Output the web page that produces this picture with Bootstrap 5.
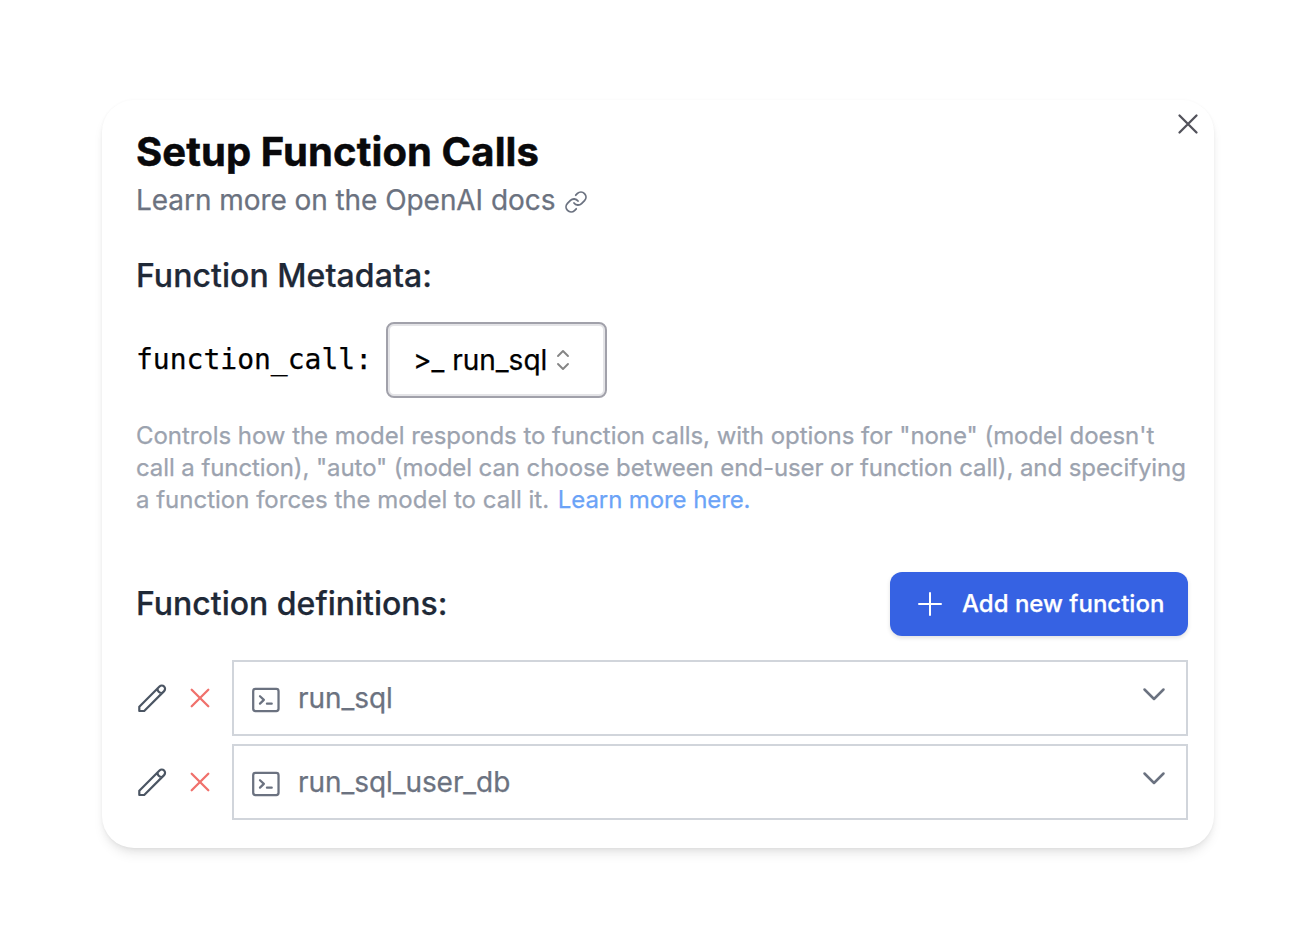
<!DOCTYPE html>
<html lang="en">
<head>
<meta charset="utf-8">
<title>Setup Function Calls</title>
<link href="https://cdn.jsdelivr.net/npm/bootstrap@5.3.0/dist/css/bootstrap.min.css" rel="stylesheet">
<style>
body{font-family:Inter,"Liberation Sans",sans-serif;background:#fff;color:#09090b;padding:100px 102px;-webkit-text-stroke:.25px}
svg{display:block;flex:none;fill:none;stroke:currentColor;stroke-linecap:round;stroke-linejoin:round}
.dialog-panel{height:748px;border-radius:32px;padding:24px 26px 28px 34px;background:#fff;box-shadow:0 8px 12px -2px rgba(0,0,0,.08),0 4px 8px -4px rgba(0,0,0,.1),0 0 3px rgba(0,0,0,.04)}
.close-x{top:12px;right:14px;color:#52525b;line-height:0}
h1{font-size:40px;line-height:56px;font-weight:700;letter-spacing:.1px;-webkit-text-stroke:.5px}
.docs-link{font-size:28px;line-height:40px;color:#6b7280;gap:9px;letter-spacing:-.06px}
.docs-link svg{margin-top:4px}
h2{font-size:32px;line-height:48px;font-weight:500;color:#1f2937}
.meta-title{margin-top:32px;letter-spacing:.06px}
.call-row{margin-top:22px;gap:14px}
.call-name{font-family:"DejaVu Sans Mono",monospace;font-size:28px;line-height:40px;color:#000}
.call-select{width:221px;height:76px;border:2px solid #a1a1aa;border-radius:8px;box-shadow:inset 0 0 0 2px #e4e4e7;padding:0 25px;font-size:28px;color:#000;background:#fff}
.call-select svg{color:#858585;margin-left:7px}
.help-text{font-size:24px;line-height:32px;color:#9ca3af;margin-top:22px;letter-spacing:-.045px;white-space:nowrap}
.help-mid{letter-spacing:-.09px}
.help-end{letter-spacing:0}
.help-text a{color:#6ba3f7;margin-left:2px;letter-spacing:-.1px}
.defs-head{margin-top:56px;height:64px}
.add-btn,.add-btn:hover{width:298px;height:64px;border-radius:12px;border:0;background:#3662e3;color:#fff;font-size:24px;font-weight:500;padding:0 24px;gap:16px;white-space:nowrap;box-shadow:0 2px 4px rgba(0,0,0,.12)}
.def-list{margin-top:24px;gap:8px}
.def-item{height:76px}
.edit-btn{color:#4b5563;margin-right:20px}
.remove-btn{color:#f0716c;margin-right:20px}
.def-box{height:76px;border:2px solid #d1d5db;color:#6b7280;font-size:28px;padding:0 16px;gap:16px;letter-spacing:-.06px}
.term-icon{margin-top:4px}
.chev-icon{margin-bottom:8px}
</style>
</head>
<body>
<main class="dialog-panel position-relative">
<button class="close-x btn border-0 p-0 position-absolute" aria-label="Close"><svg width="24" height="24" viewBox="0 0 24 24" stroke-width="2.3"><path d="M3.5 3.5l17 17M20.5 3.5l-17 17"/></svg></button>
<h1 class="mb-0">Setup Function Calls</h1>
<div class="docs-link d-flex align-items-center"><span>Learn more on the OpenAI docs</span><svg width="24" height="24" viewBox="0 0 24 24" stroke-width="1.8"><path d="M10 13a5 5 0 0 0 7.54.54l3-3a5 5 0 0 0-7.07-7.07l-1.72 1.71M14 11a5 5 0 0 0-7.54-.54l-3 3a5 5 0 0 0 7.07 7.07l1.71-1.71"/></svg></div>
<h2 class="meta-title mb-0">Function Metadata:</h2>
<div class="call-row d-flex align-items-center"><span class="call-name">function_call:</span>
<button class="call-select d-flex align-items-center"><span>&gt;_ run_sql</span><svg width="18" height="24" viewBox="0 0 18 24" stroke-width="1.9"><path d="M4 8l5-5 5 5M4 16l5 5 5-5"/></svg></button></div>
<p class="help-text mb-0">Controls how the model responds to function calls, with options for "none" (model doesn't<br><span class="help-mid">call a function), "auto" (model can choose between end-user or function call), and specifying</span><br><span class="help-end">a function forces the model to call it. <a class="text-decoration-none" href="#">Learn more here.</a></span></p>
<div class="defs-head d-flex align-items-center justify-content-between"><h2 class="mb-0">Function definitions:</h2>
<button class="add-btn btn d-flex align-items-center"><svg width="32" height="32" viewBox="0 0 32 32" stroke-width="2"><path d="M16 5v22M5 16h22"/></svg><span>Add new function</span></button></div>
<div class="def-list d-flex flex-column">
<div class="def-item d-flex align-items-center">
<button class="edit-btn btn border-0 p-0" aria-label="Edit"><svg width="32" height="32" viewBox="0 0 32 32" stroke-width="2.2"><path d="M3.3 29v-4.3L23.5 4.5a3.25 3.25 0 0 1 4.6 4.6L8.2 29zM21.6 6.4c-.3 2.8 1.7 4.8 4.6 4.6"/></svg></button>
<button class="remove-btn btn border-0 p-0" aria-label="Remove"><svg width="24" height="24" viewBox="0 0 24 24" stroke-width="2.3"><path d="M3.7 3.7l16.6 16.6M20.3 3.7L3.7 20.3"/></svg></button>
<div class="def-box flex-grow-1 d-flex align-items-center"><svg class="term-icon" width="32" height="32" viewBox="0 0 24 24" stroke-width="1.7"><rect x="2.4" y="3.7" width="19" height="16.6" rx="1.7"/><path d="M7.5 9.2l2.9 2.7-2.9 2.8M12.7 14.8h3.6"/></svg><span>run_sql</span><svg class="chev-icon ms-auto" width="32" height="32" viewBox="0 0 32 32" stroke-width="2.5"><path d="M6.5 11.5l9.5 9.5 9.5-9.5"/></svg></div>
</div>
<div class="def-item d-flex align-items-center">
<button class="edit-btn btn border-0 p-0" aria-label="Edit"><svg width="32" height="32" viewBox="0 0 32 32" stroke-width="2.2"><path d="M3.3 29v-4.3L23.5 4.5a3.25 3.25 0 0 1 4.6 4.6L8.2 29zM21.6 6.4c-.3 2.8 1.7 4.8 4.6 4.6"/></svg></button>
<button class="remove-btn btn border-0 p-0" aria-label="Remove"><svg width="24" height="24" viewBox="0 0 24 24" stroke-width="2.3"><path d="M3.7 3.7l16.6 16.6M20.3 3.7L3.7 20.3"/></svg></button>
<div class="def-box flex-grow-1 d-flex align-items-center"><svg class="term-icon" width="32" height="32" viewBox="0 0 24 24" stroke-width="1.7"><rect x="2.4" y="3.7" width="19" height="16.6" rx="1.7"/><path d="M7.5 9.2l2.9 2.7-2.9 2.8M12.7 14.8h3.6"/></svg><span>run_sql_user_db</span><svg class="chev-icon ms-auto" width="32" height="32" viewBox="0 0 32 32" stroke-width="2.5"><path d="M6.5 11.5l9.5 9.5 9.5-9.5"/></svg></div>
</div>
</div>
</main>
<script src="https://cdn.jsdelivr.net/npm/bootstrap@5.3.0/dist/js/bootstrap.bundle.min.js"></script>
</body>
</html>
